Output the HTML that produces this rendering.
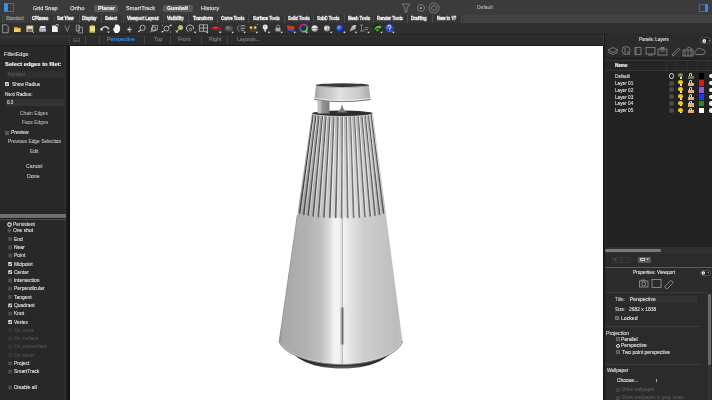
<!DOCTYPE html>
<html><head><meta charset="utf-8">
<style>
*{margin:0;padding:0;box-sizing:border-box}
html,body{-webkit-font-smoothing:antialiased;width:712px;height:400px;overflow:hidden;background:#2a2a2a;font-family:"Liberation Sans",sans-serif;color:#ddd}
.a{position:absolute;white-space:nowrap}
.tx{will-change:transform;-webkit-text-stroke:0.08px currentColor}
.txb{-webkit-text-stroke:0.18px currentColor}
</style></head><body>
<div class="a" style="left:0px;top:0px;width:712px;height:15px;background:#3b3b3b;"></div>
<div class="a" style="left:0px;top:15px;width:712px;height:8px;background:#353535;"></div>
<div class="a" style="left:463px;top:15px;width:249px;height:8px;background:#434343;"></div>
<div class="a" style="left:0px;top:23px;width:712px;height:10px;background:#303030;"></div>
<div class="a" style="left:0px;top:33px;width:712px;height:2px;background:#2a2a2a;"></div>
<div class="a" style="left:0px;top:35px;width:712px;height:3px;background:#353535;"></div>
<div class="a" style="left:0px;top:38px;width:712px;height:3px;background:#2f2f2f;"></div>
<div class="a" style="left:0px;top:41px;width:712px;height:4px;background:#2c2c2c;"></div>
<div class="a" style="left:0px;top:45px;width:712px;height:1px;background:#1c1c1c;"></div>
<div class="a" style="left:0px;top:46px;width:712px;height:354px;background:#282828;"></div>
<div class="a" style="left:64px;top:46px;width:2px;height:354px;background:#2f2f2f;"></div>
<div class="a" style="left:66px;top:45px;width:2px;height:355px;background:#1c1c1c;"></div>
<div class="a" style="left:68px;top:45px;width:2px;height:355px;background:#141414;"></div>
<div class="a" style="left:69px;top:34px;width:1px;height:12px;background:#3a3a3a;"></div>
<div class="a" style="left:70px;top:45.5px;width:533px;height:354.5px;background:#ffffff;"></div>
<div class="a" style="left:603px;top:34px;width:2px;height:366px;background:#1a1a1a;"></div>
<div class="a" style="left:4px;top:3.2px;width:3.6px;height:8.8px;background:#3a8ee6;border-radius:0.8px"></div>
<div class="a" style="left:7.2px;top:3.2px;width:6.4px;height:8.8px;background:transparent;border:0.9px solid #3a6db0;border-left:none;border-radius:0 0.8px 0.8px 0"></div>
<div class="a tx" style="left:32.73px;top:5.08px;font-size:5.434px;line-height:6.24px;color:#d4d4d4;font-weight:normal;-webkit-text-stroke:0.25px #d4d4d4">Grid Snap</div>
<div class="a tx" style="left:70.27px;top:4.74px;font-size:5.815px;line-height:6.68px;color:#d4d4d4;font-weight:normal;-webkit-text-stroke:0.25px #d4d4d4">Ortho</div>
<div class="a" style="left:93.5px;top:5px;width:24px;height:7px;background:#5a5a5a;border-radius:2px"></div>
<div class="a tx txb" style="left:97.57px;top:4.97px;font-size:5.556px;line-height:6.38px;color:#f0f0f0;font-weight:bold;">Planar</div>
<div class="a tx" style="left:125.77px;top:4.85px;font-size:5.686px;line-height:6.53px;color:#d4d4d4;font-weight:normal;-webkit-text-stroke:0.25px #d4d4d4">SmartTrack</div>
<div class="a" style="left:162.7px;top:5px;width:30.3px;height:7px;background:#5a5a5a;border-radius:2px"></div>
<div class="a tx txb" style="left:167.39px;top:5.26px;font-size:5.241px;line-height:6.02px;color:#f0f0f0;font-weight:bold;">Gumball</div>
<div class="a tx" style="left:200.53px;top:4.72px;font-size:5.839px;line-height:6.71px;color:#d4d4d4;font-weight:normal;-webkit-text-stroke:0.25px #d4d4d4">History</div>
<svg class="a" style="left:400px;top:2px;" width="40" height="12" viewBox="0 0 40 12"><path d="M2 2 L10 2 L7 6 L7 10 L5 10 L5 6 Z" fill="none" stroke="#8a8a8a" stroke-width="0.8"/><circle cx="21" cy="6" r="3.5" fill="none" stroke="#8a8a8a" stroke-width="0.8"/><circle cx="21" cy="6" r="1" fill="#aaa"/><circle cx="34" cy="6" r="5" fill="none" stroke="#8a8a8a" stroke-width="0.8"/><circle cx="34" cy="6" r="2.5" fill="none" stroke="#8a8a8a" stroke-width="0.8"/></svg>
<div class="a tx" style="left:477.3px;top:5.46px;font-size:5.015px;line-height:5.76px;color:#b8b8b8;font-weight:normal;">Default</div>
<div class="a" style="left:698.8px;top:3.5px;width:6.2px;height:8.5px;background:transparent;border:0.9px solid #3a6db0;border-right:none;border-radius:0.8px 0 0 0.8px"></div>
<div class="a" style="left:704.8px;top:3.5px;width:3.6px;height:8.5px;background:#2a8af0;border-radius:0.8px"></div>
<div class="a" style="left:2px;top:15px;width:27px;height:8px;background:#3a3a3a;"></div>
<div class="a" style="left:2px;top:15px;width:1px;height:8px;background:#4a4a4a;"></div>
<div class="a" style="left:29.5px;top:15px;width:1px;height:8px;background:#4a4a4a;"></div>
<div class="a" style="left:53.7px;top:15px;width:1px;height:8px;background:#4a4a4a;"></div>
<div class="a" style="left:79px;top:15px;width:1px;height:8px;background:#4a4a4a;"></div>
<div class="a" style="left:101px;top:15px;width:1px;height:8px;background:#4a4a4a;"></div>
<div class="a" style="left:123px;top:15px;width:1px;height:8px;background:#4a4a4a;"></div>
<div class="a" style="left:163px;top:15px;width:1px;height:8px;background:#4a4a4a;"></div>
<div class="a" style="left:188.4px;top:15px;width:1px;height:8px;background:#4a4a4a;"></div>
<div class="a" style="left:216.8px;top:15px;width:1px;height:8px;background:#4a4a4a;"></div>
<div class="a" style="left:248px;top:15px;width:1px;height:8px;background:#4a4a4a;"></div>
<div class="a" style="left:283.7px;top:15px;width:1px;height:8px;background:#4a4a4a;"></div>
<div class="a" style="left:313px;top:15px;width:1px;height:8px;background:#4a4a4a;"></div>
<div class="a" style="left:343.7px;top:15px;width:1px;height:8px;background:#4a4a4a;"></div>
<div class="a" style="left:373px;top:15px;width:1px;height:8px;background:#4a4a4a;"></div>
<div class="a" style="left:406.8px;top:15px;width:1px;height:8px;background:#4a4a4a;"></div>
<div class="a" style="left:431.6px;top:15px;width:1px;height:8px;background:#4a4a4a;"></div>
<div class="a" style="left:461px;top:15px;width:1px;height:8px;background:#4a4a4a;"></div>
<div class="a tx txb" style="left:6.21px;top:16.35px;font-size:4.7px;line-height:5.40px;color:#8a8a8a;font-weight:bold;transform:scaleX(0.873);transform-origin:0 0;-webkit-text-stroke:0.3px #8a8a8a">Standard</div>
<div class="a tx txb" style="left:32.41px;top:16.35px;font-size:4.7px;line-height:5.40px;color:#f4f4f4;font-weight:bold;transform:scaleX(0.873);transform-origin:0 0;-webkit-text-stroke:0.3px #f4f4f4">CPlanes</div>
<div class="a tx txb" style="left:56.71px;top:16.35px;font-size:4.7px;line-height:5.40px;color:#f4f4f4;font-weight:bold;transform:scaleX(0.873);transform-origin:0 0;-webkit-text-stroke:0.3px #f4f4f4">Set View</div>
<div class="a tx txb" style="left:81.72px;top:16.35px;font-size:4.7px;line-height:5.40px;color:#f4f4f4;font-weight:bold;transform:scaleX(0.873);transform-origin:0 0;-webkit-text-stroke:0.3px #f4f4f4">Display</div>
<div class="a tx txb" style="left:104.91px;top:16.35px;font-size:4.7px;line-height:5.40px;color:#f4f4f4;font-weight:bold;transform:scaleX(0.873);transform-origin:0 0;-webkit-text-stroke:0.3px #f4f4f4">Select</div>
<div class="a tx txb" style="left:127.4px;top:16.35px;font-size:4.7px;line-height:5.40px;color:#f4f4f4;font-weight:bold;transform:scaleX(0.873);transform-origin:0 0;-webkit-text-stroke:0.3px #f4f4f4">Viewport Layout</div>
<div class="a tx txb" style="left:167.4px;top:16.35px;font-size:4.7px;line-height:5.40px;color:#f4f4f4;font-weight:bold;transform:scaleX(0.873);transform-origin:0 0;-webkit-text-stroke:0.3px #f4f4f4">Visibility</div>
<div class="a tx txb" style="left:192.55px;top:16.35px;font-size:4.7px;line-height:5.40px;color:#f4f4f4;font-weight:bold;transform:scaleX(0.873);transform-origin:0 0;-webkit-text-stroke:0.3px #f4f4f4">Transform</div>
<div class="a tx txb" style="left:220.81px;top:16.35px;font-size:4.7px;line-height:5.40px;color:#f4f4f4;font-weight:bold;transform:scaleX(0.873);transform-origin:0 0;-webkit-text-stroke:0.3px #f4f4f4">Curve Tools</div>
<div class="a tx txb" style="left:252.51px;top:16.35px;font-size:4.7px;line-height:5.40px;color:#f4f4f4;font-weight:bold;transform:scaleX(0.873);transform-origin:0 0;-webkit-text-stroke:0.3px #f4f4f4">Surface Tools</div>
<div class="a tx txb" style="left:287.91px;top:16.35px;font-size:4.7px;line-height:5.40px;color:#f4f4f4;font-weight:bold;transform:scaleX(0.873);transform-origin:0 0;-webkit-text-stroke:0.3px #f4f4f4">Solid Tools</div>
<div class="a tx txb" style="left:317.31px;top:16.35px;font-size:4.7px;line-height:5.40px;color:#f4f4f4;font-weight:bold;transform:scaleX(0.873);transform-origin:0 0;-webkit-text-stroke:0.3px #f4f4f4">SubD Tools</div>
<div class="a tx txb" style="left:347.72px;top:16.35px;font-size:4.7px;line-height:5.40px;color:#f4f4f4;font-weight:bold;transform:scaleX(0.873);transform-origin:0 0;-webkit-text-stroke:0.3px #f4f4f4">Mesh Tools</div>
<div class="a tx txb" style="left:377.12px;top:16.35px;font-size:4.7px;line-height:5.40px;color:#f4f4f4;font-weight:bold;transform:scaleX(0.873);transform-origin:0 0;-webkit-text-stroke:0.3px #f4f4f4">Render Tools</div>
<div class="a tx txb" style="left:411.32px;top:16.35px;font-size:4.7px;line-height:5.40px;color:#f4f4f4;font-weight:bold;transform:scaleX(0.873);transform-origin:0 0;-webkit-text-stroke:0.3px #f4f4f4">Drafting</div>
<div class="a tx txb" style="left:436.52px;top:16.35px;font-size:4.7px;line-height:5.40px;color:#f4f4f4;font-weight:bold;transform:scaleX(0.873);transform-origin:0 0;-webkit-text-stroke:0.3px #f4f4f4">New in V7</div>
<svg class="a" style="left:0px;top:0px;" width="400" height="36" viewBox="0 0 400 36"><defs><linearGradient id="cw" x1="0" y1="0" x2="1" y2="1"><stop offset="0" stop-color="#e02020"/><stop offset="0.3" stop-color="#c020c0"/><stop offset="0.5" stop-color="#2080e0"/><stop offset="0.75" stop-color="#20d060"/><stop offset="1" stop-color="#e0e020"/></linearGradient><radialGradient id="sph" cx="0.4" cy="0.35" r="0.7"><stop offset="0" stop-color="#ffffff"/><stop offset="0.6" stop-color="#c8c8c8"/><stop offset="1" stop-color="#777"/></radialGradient><radialGradient id="bsph" cx="0.35" cy="0.35" r="0.75"><stop offset="0" stop-color="#80a8ff"/><stop offset="0.45" stop-color="#2850d0"/><stop offset="1" stop-color="#0a1a60"/></radialGradient></defs><path d="M2.6 24.8 H6.5 L8.2 26.5 V32.8 H2.6 Z" fill="none" stroke="#b0b0b0" stroke-width="0.8"/><path d="M14 27 H17 L17.8 27.8 H20.6 V32 H14 Z" fill="#d4a828"/><path d="M14.2 28.8 H20.6 L20 32 H14 Z" fill="#f0d060"/><rect x="26.3" y="25.5" width="7" height="6.5" fill="#bdb596"/><rect x="27.3" y="26.3" width="5" height="2.2" fill="#eae4c8"/><rect x="27.8" y="29.2" width="4" height="2.4" fill="#6a6650"/><path d="M32.8 31.5 L34.2 33 L33 33.3 Z" fill="#ddd"/><path d="M40.5 26 H45.5 L45.5 28.5 H39.3 Z" fill="#e8e8e8"/><rect x="39.2" y="28.5" width="6.8" height="3.2" rx="0.8" fill="#b8b8b8"/><path d="M52 25.5 H55.6 L57.8 27.5 V32 H52 Z" fill="#f0f0f0"/><path d="M55.8 24.5 L58.2 24.5 L58.2 26.5" fill="none" stroke="#ddd" stroke-width="0.7"/><path d="M64.8 25.4 L67.2 31.3 M69.6 25.4 L67.2 31.3" stroke="#9a9a9a" stroke-width="0.8" fill="none"/><path d="M76.2 25.2 H79.5 V31 H76.2 Z M78.2 27.2 H82.5 V33 H78.2 Z" fill="none" stroke="#a8a8a8" stroke-width="0.75"/><rect x="89.6" y="25.8" width="5.4" height="6.6" fill="#eedc78"/><rect x="90.8" y="25.2" width="3" height="1.2" fill="#c8b050"/><rect x="89.6" y="31" width="5.4" height="1.4" fill="#c8b450"/><path d="M101 30 Q102.5 26.3 106 26.8 Q108.3 27.3 108.8 29.3" fill="none" stroke="#e8e8e8" stroke-width="1.2"/><path d="M100.2 28.2 L101 31 L103.2 29.5 Z" fill="#e8e8e8"/><path d="M107.3 31.6 L109.7 31.6 L108.5 33.2 Z" fill="#e8e8e8"/><path d="M113.3 28.5 L114.5 27.5 L115 25 L116.2 24.3 L117.2 24.8 L118.6 24.6 L119.4 26 L120.2 27 L119.8 31 L118 33 L115 33 L113.3 30 Z" fill="#f4f4f4"/><path d="M129.8 26.6 V32.5 M127.6 29.5 H131.8" stroke="#d8d8d8" stroke-width="0.8"/><circle cx="128.4" cy="29.4" r="0.9" fill="#fff"/><circle cx="142.6" cy="27.8" r="2.6" fill="none" stroke="#d0d0d0" stroke-width="0.8"/><path d="M140.7 29.8 L138.3 32" stroke="#d0d0d0" stroke-width="1.1"/><rect x="152.5" y="25.3" width="5" height="4.8" fill="none" stroke="#b8b8b8" stroke-width="0.7"/><circle cx="153.6" cy="29" r="2.2" fill="none" stroke="#d0d0d0" stroke-width="0.8"/><path d="M152 30.7 L150.4 32.2" stroke="#d0d0d0" stroke-width="1"/><circle cx="166.5" cy="28.6" r="2.4" fill="none" stroke="#d0d0d0" stroke-width="0.8"/><path d="M162 32 L164.5 30.5 M168.5 26.6 L171.2 25" stroke="#d0d0d0" stroke-width="0.9"/><circle cx="162.3" cy="31.8" r="0.7" fill="#eee"/><circle cx="171" cy="25.2" r="0.7" fill="#eee"/><circle cx="162.5" cy="25.5" r="0.6" fill="#bbb"/><circle cx="170.6" cy="32" r="0.6" fill="#bbb"/><circle cx="180.5" cy="27.4" r="2.5" fill="#b8c868"/><path d="M178.5 29.6 L176 32.3" stroke="#c8d070" stroke-width="1.2"/><path d="M175.5 30.5 L177.8 32.5" stroke="#ddd" stroke-width="0.6"/><path d="M188 31.5 A3.6 3.6 0 1 1 193.6 29" fill="none" stroke="#d0d0d0" stroke-width="0.9"/><circle cx="190.6" cy="29.5" r="1.2" fill="none" stroke="#ddd" stroke-width="0.6"/><path d="M194.0 31.8 L196.39999999999998 31.8 L195.2 33.4 Z" fill="#e8e8e8"/><path d="M199.4 24.8 H207.5 V31.3 H199.4 Z M203.45 24.8 V31.3 M199.4 28 H207.5" fill="none" stroke="#c8c8c8" stroke-width="0.75"/><path d="M206.0 31.8 L208.39999999999998 31.8 L207.2 33.4 Z" fill="#e8e8e8"/><ellipse cx="216.2" cy="28.3" rx="5.3" ry="1.9" fill="#b01515"/><ellipse cx="215.5" cy="27.6" rx="2.5" ry="0.7" fill="#e06060"/><rect x="219.5" y="31.5" width="1.6" height="1.6" fill="#ddd"/><ellipse cx="228.8" cy="28.5" rx="4" ry="2.8" fill="#555"/><ellipse cx="228" cy="27.8" rx="2" ry="1.3" fill="#777"/><path d="M231.5 31.8 L233.89999999999998 31.8 L232.7 33.4 Z" fill="#e8e8e8"/><path d="M239.6 25.5 A3 3 0 0 0 239.6 31.3" fill="none" stroke="#999" stroke-width="0.7"/><path d="M240.5 25.8 H245.5 M240.5 28.3 H245 M241 30.3 H244" stroke="#d8d8d8" stroke-width="0.7"/><path d="M243.4 31.8 L245.79999999999998 31.8 L244.6 33.4 Z" fill="#e8e8e8"/><ellipse cx="253" cy="29.8" rx="3.5" ry="2.2" fill="#4a4030"/><circle cx="251" cy="27.5" r="1.3" fill="#f0e030"/><circle cx="255.2" cy="27.5" r="1.3" fill="#f0e030"/><circle cx="257.5" cy="24.2" r="0.5" fill="#ccc"/><path d="M255.60000000000002 31.8 L258.0 31.8 L256.8 33.4 Z" fill="#e8e8e8"/><circle cx="265.2" cy="26.9" r="2.5" fill="#eeeeee"/><rect x="264.3" y="28.8" width="1.8" height="2.7" fill="#dddddd"/><circle cx="264.8" cy="26.6" r="1" fill="#bbb"/><path d="M267.8 31.8 L270.2 31.8 L269 33.4 Z" fill="#e8e8e8"/><rect x="275.5" y="27.8" width="5" height="3.6" fill="#aaaaaa"/><path d="M276.5 27.8 V26.5 A1.5 1.5 0 0 1 279.5 26.5 V27.8" fill="none" stroke="#9a9a9a" stroke-width="0.8"/><path d="M280.5 31.8 L282.9 31.8 L281.7 33.4 Z" fill="#e8e8e8"/><path d="M287 25.2 L294.8 26.5 L294 30 L287.5 29 Z" fill="#d03a28"/><path d="M287.5 29 L294 30 L293.2 31.4 L288 30.8 Z" fill="#3a5ac8"/><path d="M293.6 31.8 L296.0 31.8 L294.8 33.4 Z" fill="#e8e8e8"/><circle cx="303.6" cy="28.1" r="3.6" fill="none" stroke="url(#cw)" stroke-width="1.7"/><path d="M305.5 31.8 L307.9 31.8 L306.7 33.4 Z" fill="#e8e8e8"/><circle cx="314.8" cy="28.5" r="3.3" fill="url(#sph)"/><rect x="311.5" y="28.2" width="6.6" height="0.6" fill="#666"/><circle cx="327" cy="28.5" r="3" fill="url(#sph)"/><rect x="326.8" y="25.3" width="0.6" height="6.4" fill="#555"/><path d="M330.0 31.8 L332.4 31.8 L331.2 33.4 Z" fill="#e8e8e8"/><circle cx="340" cy="28.5" r="3.7" fill="url(#bsph)"/><rect x="343.6" y="31.5" width="1.6" height="1.6" fill="#ddd"/><path d="M349.5 31.5 L352 26 L356 25 L355.5 29 Z" fill="#b8b0a0"/><path d="M352 26 L356 25 L354.5 27.5 Z" fill="#e0d8c0"/><path d="M354.8 31.8 L357.2 31.8 L356 33.4 Z" fill="#e8e8e8"/><path d="M360 25 H363 M361.5 25 V31 M364.5 27.5 H368.5 M364.5 29.5 H368 M360 31 H365" stroke="#b0b0b0" stroke-width="0.6"/><path d="M367.3 31.8 L369.7 31.8 L368.5 33.4 Z" fill="#e8e8e8"/><circle cx="377.3" cy="28.3" r="4.2" fill="#1a2a10"/><path d="M374 30.5 Q375 25.5 379.5 26 L379 24.8 L381.5 27.2 L378.8 29.2 L379.2 27.6 Q376.3 27.3 374 30.5 Z" fill="#70d040"/><circle cx="377.5" cy="30" r="1.5" fill="#50a030"/><path d="M380.3 31.8 L382.7 31.8 L381.5 33.4 Z" fill="#e8e8e8"/><circle cx="389.5" cy="28.3" r="4.2" fill="#2848b8"/><circle cx="388.5" cy="27" r="2.5" fill="#6080e0" opacity="0.6"/><path d="M388 26.8 A1.5 1.5 0 1 1 389.8 28.2 V29.6" fill="none" stroke="#f0f0f0" stroke-width="0.9"/><circle cx="389.8" cy="31" r="0.5" fill="#fff"/><path d="M392.2 31.8 L394.59999999999997 31.8 L393.4 33.4 Z" fill="#e8e8e8"/></svg>
<div class="a" style="left:70px;top:35px;width:533px;height:10px;background:#2b2b2b;"></div>
<div class="a" style="left:70px;top:36px;width:533px;height:0.6px;background:#333;"></div>
<div class="a" style="left:72.5px;top:37.5px;width:7px;height:4.5px;background:transparent;border:0.6px solid #4e4e4e"></div>
<div class="a" style="left:72.5px;top:39.5px;width:7px;height:0.6px;background:#4e4e4e;"></div>
<div class="a" style="left:85px;top:36px;width:1px;height:8px;background:#444;"></div>
<div class="a" style="left:99px;top:36px;width:1px;height:8px;background:#444;"></div>
<div class="a tx" style="left:106.58px;top:36.20px;font-size:5.3px;line-height:6.09px;color:#3584e4;font-weight:normal;-webkit-text-stroke:0.2px #3584e4">Perspective</div>
<div class="a" style="left:144.3px;top:36px;width:1px;height:8px;background:#444;"></div>
<div class="a tx" style="left:154.29px;top:36.20px;font-size:5.3px;line-height:6.09px;color:#777;font-weight:normal;-webkit-text-stroke:0.2px #777">Top</div>
<div class="a" style="left:170px;top:36px;width:1px;height:8px;background:#444;"></div>
<div class="a tx" style="left:177.98px;top:36.20px;font-size:5.3px;line-height:6.09px;color:#777;font-weight:normal;-webkit-text-stroke:0.2px #777">Front</div>
<div class="a" style="left:201px;top:36px;width:1px;height:8px;background:#444;"></div>
<div class="a tx" style="left:209.18px;top:36.20px;font-size:5.3px;line-height:6.09px;color:#777;font-weight:normal;-webkit-text-stroke:0.2px #777">Right</div>
<div class="a" style="left:227px;top:36px;width:1px;height:8px;background:#444;"></div>
<div class="a tx" style="left:237.08px;top:36.20px;font-size:5.3px;line-height:6.09px;color:#777;font-weight:normal;-webkit-text-stroke:0.2px #777">Layouts...</div>
<div class="a tx" style="left:3.56px;top:50.98px;font-size:5.542px;line-height:6.37px;color:#e0e0e0;font-weight:normal;">FilletEdge</div>
<div class="a tx txb" style="left:4.88px;top:60.73px;font-size:5.826px;line-height:6.69px;color:#f0f0f0;font-weight:bold;">Select edges to filet:</div>
<div class="a" style="left:6px;top:71px;width:58px;height:7px;background:#2f2f2f;"></div>
<div class="a tx" style="left:7.61px;top:71.56px;font-size:4.908px;line-height:5.64px;color:#5a5a5a;font-weight:normal;">Number</div>
<div class="a" style="left:5px;top:82px;width:3.8px;height:3.8px;background:#d8d8d8;border-radius:0.5px"></div>
<svg class="a" style="left:5px;top:82px;" width="4" height="4" viewBox="0 0 4 4"><path d="M0.8 2 L1.7 3 L3.3 0.8" fill="none" stroke="#222" stroke-width="0.7"/></svg>
<div class="a tx" style="left:11.71px;top:81.66px;font-size:4.8px;line-height:5.52px;color:#e8e8e8;font-weight:normal;">Show Radius</div>
<div class="a tx" style="left:4.62px;top:91.66px;font-size:4.8px;line-height:5.52px;color:#e8e8e8;font-weight:normal;">Next Radius:</div>
<div class="a" style="left:5.6px;top:99px;width:58.8px;height:7px;background:#333333;"></div>
<div class="a tx" style="left:6.86px;top:100.40px;font-size:4.532px;line-height:5.21px;color:#e0e0e0;font-weight:normal;">0.3</div>
<div class="a tx" style="left:20.36px;top:110.57px;font-size:4.9px;line-height:5.63px;color:#b4b4b4;font-weight:normal;">Chain Edges</div>
<div class="a tx" style="left:21.51px;top:119.57px;font-size:4.9px;line-height:5.63px;color:#b4b4b4;font-weight:normal;">Face Edges</div>
<div class="a" style="left:5.2px;top:130.6px;width:4px;height:4px;background:#5a5a5a;border-radius:0.5px"></div>
<div class="a tx" style="left:10.8px;top:130.01px;font-size:4.965px;line-height:5.70px;color:#e8e8e8;font-weight:normal;">Preview</div>
<div class="a tx" style="left:7.81px;top:139.07px;font-size:4.9px;line-height:5.63px;color:#c4c4c4;font-weight:normal;">Previous Edge Selection</div>
<div class="a tx" style="left:29.61px;top:148.57px;font-size:4.9px;line-height:5.63px;color:#c4c4c4;font-weight:normal;">Edit</div>
<div class="a tx" style="left:25.94px;top:162.73px;font-size:5.266px;line-height:6.05px;color:#d0d0d0;font-weight:normal;">Cancel</div>
<div class="a tx" style="left:27.28px;top:173.23px;font-size:5.276px;line-height:6.06px;color:#d0d0d0;font-weight:normal;">Done</div>
<div class="a" style="left:0px;top:209px;width:66px;height:1px;background:#222;"></div>
<div class="a" style="left:0px;top:213.5px;width:66px;height:4px;background:#6e6e6e;"></div>
<div class="a" style="left:0px;top:218px;width:66px;height:1px;background:#1e1e1e;"></div>
<div class="a" style="left:0px;top:219px;width:66px;height:1px;background:#4a4a4a;"></div>
<div class="a tx" style="left:12.8px;top:222.02px;font-size:4.95px;line-height:5.69px;color:#e8e8e8;font-weight:normal;">Persistent</div>
<div class="a tx" style="left:13.0px;top:228.02px;font-size:4.95px;line-height:5.69px;color:#e8e8e8;font-weight:normal;">One shot</div>
<div class="a tx" style="left:13.6px;top:236.52px;font-size:4.95px;line-height:5.69px;color:#e8e8e8;font-weight:normal;">End</div>
<div class="a tx" style="left:13.6px;top:245.02px;font-size:4.95px;line-height:5.69px;color:#e8e8e8;font-weight:normal;">Near</div>
<div class="a tx" style="left:13.6px;top:253.22px;font-size:4.95px;line-height:5.69px;color:#e8e8e8;font-weight:normal;">Point</div>
<div class="a tx" style="left:13.6px;top:261.52px;font-size:4.95px;line-height:5.69px;color:#e8e8e8;font-weight:normal;">Midpoint</div>
<div class="a tx" style="left:13.75px;top:269.72px;font-size:4.95px;line-height:5.69px;color:#e8e8e8;font-weight:normal;">Center</div>
<div class="a tx" style="left:13.55px;top:278.02px;font-size:4.95px;line-height:5.69px;color:#e8e8e8;font-weight:normal;">Intersection</div>
<div class="a tx" style="left:13.6px;top:286.22px;font-size:4.95px;line-height:5.69px;color:#e8e8e8;font-weight:normal;">Perpendicular</div>
<div class="a tx" style="left:13.9px;top:294.52px;font-size:4.95px;line-height:5.69px;color:#e8e8e8;font-weight:normal;">Tangent</div>
<div class="a tx" style="left:13.8px;top:302.82px;font-size:4.95px;line-height:5.69px;color:#e8e8e8;font-weight:normal;">Quadrant</div>
<div class="a tx" style="left:13.6px;top:311.12px;font-size:4.95px;line-height:5.69px;color:#e8e8e8;font-weight:normal;">Knot</div>
<div class="a tx" style="left:14.0px;top:319.52px;font-size:4.95px;line-height:5.69px;color:#e8e8e8;font-weight:normal;">Vertex</div>
<div class="a tx" style="left:13.8px;top:327.82px;font-size:4.95px;line-height:5.69px;color:#555555;font-weight:normal;">On curve</div>
<div class="a tx" style="left:13.8px;top:336.02px;font-size:4.95px;line-height:5.69px;color:#555555;font-weight:normal;">On surface</div>
<div class="a tx" style="left:13.8px;top:344.32px;font-size:4.95px;line-height:5.69px;color:#555555;font-weight:normal;">On polysurface</div>
<div class="a tx" style="left:13.8px;top:352.52px;font-size:4.95px;line-height:5.69px;color:#555555;font-weight:normal;">On mesh</div>
<div class="a tx" style="left:13.6px;top:360.82px;font-size:4.95px;line-height:5.69px;color:#e8e8e8;font-weight:normal;">Project</div>
<div class="a tx" style="left:13.8px;top:369.02px;font-size:4.95px;line-height:5.69px;color:#e8e8e8;font-weight:normal;">SmartTrack</div>
<div class="a tx" style="left:13.6px;top:385.02px;font-size:4.95px;line-height:5.69px;color:#e8e8e8;font-weight:normal;">Disable all</div>
<svg class="a" style="left:0px;top:0px;" width="66" height="400" viewBox="0 0 66 400"><circle cx="9.5" cy="224.60" r="1.75" fill="#1e1e1e" stroke="#e8e8e8" stroke-width="1.1"/><circle cx="9.5" cy="230.60" r="2.1" fill="#505050"/><rect x="8.2" y="237.10" width="3.8" height="3.8" rx="0.4" fill="#4c4c4c"/><rect x="8.2" y="245.60" width="3.8" height="3.8" rx="0.4" fill="#4c4c4c"/><rect x="8.2" y="253.80" width="3.8" height="3.8" rx="0.4" fill="#4c4c4c"/><rect x="8.2" y="262.10" width="3.8" height="3.8" rx="0.5" fill="#d8d8d8"/><path d="M8.9 264.10 L9.8 265.10 L11.4 262.90" fill="none" stroke="#1e1e1e" stroke-width="0.75"/><rect x="8.2" y="270.30" width="3.8" height="3.8" rx="0.5" fill="#d8d8d8"/><path d="M8.9 272.30 L9.8 273.30 L11.4 271.10" fill="none" stroke="#1e1e1e" stroke-width="0.75"/><rect x="8.2" y="278.60" width="3.8" height="3.8" rx="0.4" fill="#4c4c4c"/><rect x="8.2" y="286.80" width="3.8" height="3.8" rx="0.4" fill="#4c4c4c"/><rect x="8.2" y="295.10" width="3.8" height="3.8" rx="0.4" fill="#4c4c4c"/><rect x="8.2" y="303.40" width="3.8" height="3.8" rx="0.5" fill="#d8d8d8"/><path d="M8.9 305.40 L9.8 306.40 L11.4 304.20" fill="none" stroke="#1e1e1e" stroke-width="0.75"/><rect x="8.2" y="311.70" width="3.8" height="3.8" rx="0.4" fill="#4c4c4c"/><rect x="8.2" y="320.10" width="3.8" height="3.8" rx="0.5" fill="#d8d8d8"/><path d="M8.9 322.10 L9.8 323.10 L11.4 320.90" fill="none" stroke="#1e1e1e" stroke-width="0.75"/><rect x="8.2" y="328.40" width="3.8" height="3.8" rx="0.4" fill="#353535"/><rect x="8.2" y="336.60" width="3.8" height="3.8" rx="0.4" fill="#353535"/><rect x="8.2" y="344.90" width="3.8" height="3.8" rx="0.4" fill="#353535"/><rect x="8.2" y="353.10" width="3.8" height="3.8" rx="0.4" fill="#353535"/><rect x="8.2" y="361.40" width="3.8" height="3.8" rx="0.4" fill="#4c4c4c"/><rect x="8.2" y="369.60" width="3.8" height="3.8" rx="0.4" fill="#4c4c4c"/><rect x="8.2" y="385.60" width="3.8" height="3.8" rx="0.4" fill="#4c4c4c"/></svg>
<div class="a" style="left:605px;top:34px;width:107px;height:366px;background:#2b2b2b;"></div>
<div class="a" style="left:603px;top:34px;width:1px;height:12px;background:#3c3c3c;"></div>
<div class="a tx" style="left:639.04px;top:37.31px;font-size:4.52px;line-height:5.19px;color:#e8e8e8;font-weight:normal;">Panels: Layers</div>
<div class="a" style="left:700.4px;top:37px;width:11px;height:7px;border-radius:3.5px;background:#1e1e1e;border:0.7px solid #505050"></div>
<svg class="a" style="left:701px;top:37.5px;" width="10" height="6" viewBox="0 0 10 6"><circle cx="3.3" cy="3" r="1.9" fill="#f0f0f0"/><circle cx="3.3" cy="3" r="0.6" fill="#333"/><path d="M7.2 2.4 L9.2 2.4 L8.2 3.6 Z" fill="#e0e0e0"/></svg>
<svg class="a" style="left:606px;top:45px;" width="100" height="12" viewBox="0 0 100 12"><g fill="none" stroke="#9a9a9a" stroke-width="0.7"><path d="M2 5 L7 2.5 L12 5 L7 7.5 Z"/><path d="M2 7 L7 9.5 L12 7"/><circle cx="20" cy="5.5" r="4"/><path d="M19 3 V8.5 M21 6 L24 10"/><path d="M29 2.5 H35 V9.5 H29 Z M30 2.5 V9.5"/><rect x="40" y="2.5" width="9" height="6.5"/><path d="M42 10 H47"/><rect x="52" y="4" width="9" height="6"/><rect x="55" y="2.5" width="3" height="1.5"/><path d="M54 6 H59"/><path d="M66 10 L72.5 3 L74 4.5 L67.5 11 Z"/><rect x="77" y="5" width="10" height="6"/><path d="M79 5 V11 M82 5 V11 M85 5 V11 M80 4 L83 2 L86 4"/><path d="M89.5 9.5 H97 A2.5 2.5 0 0 0 96 4.5 A3.5 3.5 0 0 0 90 6 A2 2 0 0 0 89.5 9.5 Z"/></g></svg>
<div class="a" style="left:605px;top:57px;width:107px;height:190px;background:#222222;"></div>
<div class="a" style="left:605px;top:57px;width:2px;height:190px;background:#2a2a2a;"></div>
<div class="a" style="left:605px;top:59.5px;width:107px;height:11px;background:#252525;"></div>
<div class="a" style="left:605px;top:59.5px;width:107px;height:0.7px;background:#363636;"></div>
<div class="a" style="left:605px;top:70.3px;width:107px;height:0.7px;background:#363636;"></div>
<div class="a tx txb" style="left:614.62px;top:62.64px;font-size:4.6px;line-height:5.29px;color:#f0f0f0;font-weight:bold;">Name</div>
<div class="a" style="left:665.5px;top:61px;width:0.6px;height:8.5px;background:#303030;"></div>
<div class="a" style="left:676px;top:61px;width:0.6px;height:8.5px;background:#303030;"></div>
<div class="a" style="left:686.5px;top:61px;width:0.6px;height:8.5px;background:#303030;"></div>
<div class="a" style="left:697px;top:61px;width:0.6px;height:8.5px;background:#303030;"></div>
<div class="a" style="left:707.5px;top:61px;width:0.6px;height:8.5px;background:#303030;"></div>
<div class="a tx" style="left:614.52px;top:73.85px;font-size:4.7px;line-height:5.40px;color:#e4e4e4;font-weight:normal;">Default</div>
<div class="a" style="left:668.8px;top:73.30px;width:5.6px;height:5.6px;border-radius:50%;border:1.3px solid #d8d8d8;background:#222"></div>
<div class="a" style="left:678.2px;top:73.30px;width:5.2px;height:4px;border-radius:50% 50% 40% 40%;background:#8a7a50"></div>
<div class="a" style="left:679.8px;top:77.10px;width:2px;height:1.8px;background:#ddd"></div>
<div class="a" style="left:688px;top:75.80px;width:5.5px;height:3.2px;background:#77705a"></div>
<div class="a" style="left:689.3px;top:73.10px;width:3px;height:3.2px;border:0.8px solid #ddd;border-bottom:none;border-radius:1.5px 1.5px 0 0"></div>
<div class="a" style="left:698.5px;top:73.3px;width:5.7px;height:5.6px;background:#000000;"></div>
<div class="a" style="left:708.6px;top:73.80px;width:6px;height:4.6px;border-radius:2.3px;background:#f0f0f0"></div>
<div class="a tx" style="left:614.52px;top:80.75px;font-size:4.7px;line-height:5.40px;color:#e4e4e4;font-weight:normal;">Layer 01</div>
<div class="a" style="left:669px;top:80.50px;width:5px;height:5px;border-radius:50%;background:#4a4a4a"></div>
<div class="a" style="left:678.2px;top:80.20px;width:5.2px;height:4px;border-radius:50% 50% 40% 40%;background:#f2c81a"></div>
<div class="a" style="left:679.8px;top:84.00px;width:2px;height:1.8px;background:#ddd"></div>
<div class="a" style="left:688px;top:82.70px;width:5.5px;height:3.2px;background:#e0b070"></div>
<div class="a" style="left:689.3px;top:80.00px;width:3px;height:3.2px;border:0.8px solid #ddd;border-bottom:none;border-radius:1.5px 1.5px 0 0"></div>
<div class="a" style="left:698.5px;top:80.2px;width:5.7px;height:5.6px;background:#e01818;"></div>
<div class="a" style="left:708.6px;top:80.70px;width:6px;height:4.6px;border-radius:2.3px;background:#f0f0f0"></div>
<div class="a tx" style="left:614.52px;top:87.65px;font-size:4.7px;line-height:5.40px;color:#e4e4e4;font-weight:normal;">Layer 02</div>
<div class="a" style="left:669px;top:87.40px;width:5px;height:5px;border-radius:50%;background:#4a4a4a"></div>
<div class="a" style="left:678.2px;top:87.10px;width:5.2px;height:4px;border-radius:50% 50% 40% 40%;background:#f2c81a"></div>
<div class="a" style="left:679.8px;top:90.90px;width:2px;height:1.8px;background:#ddd"></div>
<div class="a" style="left:688px;top:89.60px;width:5.5px;height:3.2px;background:#e0b070"></div>
<div class="a" style="left:689.3px;top:86.90px;width:3px;height:3.2px;border:0.8px solid #ddd;border-bottom:none;border-radius:1.5px 1.5px 0 0"></div>
<div class="a" style="left:698.5px;top:87.1px;width:5.7px;height:5.6px;background:#9b55e0;"></div>
<div class="a" style="left:708.6px;top:87.60px;width:6px;height:4.6px;border-radius:2.3px;background:#f0f0f0"></div>
<div class="a tx" style="left:614.52px;top:94.55px;font-size:4.7px;line-height:5.40px;color:#e4e4e4;font-weight:normal;">Layer 03</div>
<div class="a" style="left:669px;top:94.30px;width:5px;height:5px;border-radius:50%;background:#4a4a4a"></div>
<div class="a" style="left:678.2px;top:94.00px;width:5.2px;height:4px;border-radius:50% 50% 40% 40%;background:#f2c81a"></div>
<div class="a" style="left:679.8px;top:97.80px;width:2px;height:1.8px;background:#ddd"></div>
<div class="a" style="left:688px;top:96.50px;width:5.5px;height:3.2px;background:#e0b070"></div>
<div class="a" style="left:689.3px;top:93.80px;width:3px;height:3.2px;border:0.8px solid #ddd;border-bottom:none;border-radius:1.5px 1.5px 0 0"></div>
<div class="a" style="left:698.5px;top:94.0px;width:5.7px;height:5.6px;background:#1a3cf0;"></div>
<div class="a" style="left:708.6px;top:94.50px;width:6px;height:4.6px;border-radius:2.3px;background:#f0f0f0"></div>
<div class="a tx" style="left:614.52px;top:101.45px;font-size:4.7px;line-height:5.40px;color:#e4e4e4;font-weight:normal;">Layer 04</div>
<div class="a" style="left:669px;top:101.20px;width:5px;height:5px;border-radius:50%;background:#4a4a4a"></div>
<div class="a" style="left:678.2px;top:100.90px;width:5.2px;height:4px;border-radius:50% 50% 40% 40%;background:#f2c81a"></div>
<div class="a" style="left:679.8px;top:104.70px;width:2px;height:1.8px;background:#ddd"></div>
<div class="a" style="left:688px;top:103.40px;width:5.5px;height:3.2px;background:#e0b070"></div>
<div class="a" style="left:689.3px;top:100.70px;width:3px;height:3.2px;border:0.8px solid #ddd;border-bottom:none;border-radius:1.5px 1.5px 0 0"></div>
<div class="a" style="left:698.5px;top:100.89999999999999px;width:5.7px;height:5.6px;background:#159a15;"></div>
<div class="a" style="left:708.6px;top:101.40px;width:6px;height:4.6px;border-radius:2.3px;background:#f0f0f0"></div>
<div class="a tx" style="left:614.52px;top:108.35px;font-size:4.7px;line-height:5.40px;color:#e4e4e4;font-weight:normal;">Layer 05</div>
<div class="a" style="left:669px;top:108.10px;width:5px;height:5px;border-radius:50%;background:#4a4a4a"></div>
<div class="a" style="left:678.2px;top:107.80px;width:5.2px;height:4px;border-radius:50% 50% 40% 40%;background:#f2c81a"></div>
<div class="a" style="left:679.8px;top:111.60px;width:2px;height:1.8px;background:#ddd"></div>
<div class="a" style="left:688px;top:110.30px;width:5.5px;height:3.2px;background:#e0b070"></div>
<div class="a" style="left:689.3px;top:107.60px;width:3px;height:3.2px;border:0.8px solid #ddd;border-bottom:none;border-radius:1.5px 1.5px 0 0"></div>
<div class="a" style="left:698.5px;top:107.8px;width:5.7px;height:5.6px;background:#ffffff;"></div>
<div class="a" style="left:708.6px;top:108.30px;width:6px;height:4.6px;border-radius:2.3px;background:#f0f0f0"></div>
<div class="a" style="left:605px;top:247px;width:107px;height:7px;background:#303030;"></div>
<div class="a" style="left:604.7px;top:248.6px;width:56px;height:3.7px;background:#7a7a7a;border-radius:1.8px"></div>
<div class="a" style="left:605px;top:254px;width:107px;height:13px;background:#2b2b2b;"></div>
<div class="a" style="left:611.8px;top:256.5px;width:19px;height:6.3px;border-radius:1px;background:#2e2e2e;border:0.5px solid #3a3a3a"></div>
<div class="a tx" style="left:614.0px;top:257.28px;font-size:5px;line-height:5.75px;color:#666;font-weight:normal;">+</div>
<div class="a tx" style="left:621.0px;top:257.28px;font-size:5px;line-height:5.75px;color:#666;font-weight:normal;">-</div>
<div class="a" style="left:637.7px;top:256.5px;width:13.3px;height:6.3px;border-radius:1px;background:#5a5a5a"></div>
<div class="a" style="left:640px;top:257.8px;width:5px;height:3.6px;background:transparent;border:0.6px solid #ccc"></div>
<svg class="a" style="left:646px;top:258px;" width="4" height="3" viewBox="0 0 4 3"><path d="M0.3 0.5 L3 0.5 L1.65 2.2 Z" fill="#ddd"/></svg>
<div class="a" style="left:605px;top:267px;width:107px;height:0.8px;background:#5a5a5a;"></div>
<div class="a" style="left:605px;top:268px;width:107px;height:124px;background:#2b2b2b;"></div>
<div class="a tx" style="left:633.43px;top:270.36px;font-size:4.681px;line-height:5.38px;color:#e8e8e8;font-weight:normal;">Properties: Viewport</div>
<div class="a" style="left:699.8px;top:269.6px;width:11px;height:6.4px;border-radius:3.2px;background:#1e1e1e;border:0.7px solid #505050"></div>
<svg class="a" style="left:700.4px;top:269.8px;" width="10" height="6" viewBox="0 0 10 6"><circle cx="3.3" cy="3" r="1.8" fill="#f0f0f0"/><circle cx="3.3" cy="3" r="0.6" fill="#333"/><path d="M7.2 2.4 L9.2 2.4 L8.2 3.6 Z" fill="#e0e0e0"/></svg>
<svg class="a" style="left:636px;top:277px;" width="40" height="12" viewBox="0 0 40 12"><g fill="none" stroke="#aaa" stroke-width="0.7"><rect x="3.5" y="4" width="8.5" height="6"/><circle cx="7.75" cy="7" r="2"/><path d="M5.5 4 V3 H9 V4"/><rect x="16" y="2.5" width="9" height="8"/><path d="M28.5 10 L34 4 A1.8 1.8 0 0 1 36.5 6.5 L31 12 Z"/></g></svg>
<div class="a" style="left:606px;top:291.5px;width:101px;height:0.6px;background:#3a3a3a;"></div>
<div class="a tx" style="left:614.91px;top:297.29px;font-size:4.649px;line-height:5.34px;color:#d8d8d8;font-weight:normal;">Title:</div>
<div class="a" style="left:628.3px;top:296px;width:69.2px;height:7px;background:#333333;"></div>
<div class="a tx" style="left:630.31px;top:297.05px;font-size:4.913px;line-height:5.65px;color:#e8e8e8;font-weight:normal;">Perspective</div>
<div class="a tx" style="left:614.81px;top:306.68px;font-size:4.773px;line-height:5.48px;color:#d8d8d8;font-weight:normal;">Size:</div>
<div class="a tx" style="left:628.75px;top:306.52px;font-size:4.946px;line-height:5.68px;color:#e8e8e8;font-weight:normal;">2682 x 1838</div>
<div class="a" style="left:615px;top:316.4px;width:4px;height:4px;background:#555;border-radius:0.6px;border:0.5px solid #777"></div>
<div class="a tx" style="left:620.79px;top:315.77px;font-size:5.116px;line-height:5.88px;color:#e8e8e8;font-weight:normal;">Locked</div>
<div class="a" style="left:605px;top:325.9px;width:95px;height:0.6px;background:#3c3c3c;"></div>
<div class="a tx" style="left:606.18px;top:330.50px;font-size:5.196px;line-height:5.97px;color:#e0e0e0;font-weight:normal;">Projection</div>
<div class="a" style="left:616px;top:337.4px;width:4px;height:4px;background:#4a4a4a;border-radius:0.6px;border:0.5px solid #6a6a6a"></div>
<div class="a tx" style="left:621.2px;top:336.69px;font-size:4.98px;line-height:5.72px;color:#e8e8e8;font-weight:normal;">Parallel</div>
<div class="a" style="left:615.8px;top:343.8px;width:4.4px;height:4.4px;border-radius:50%;border:1.1px solid #e8e8e8;background:#1e1e1e"></div>
<div class="a tx" style="left:621.2px;top:343.30px;font-size:4.972px;line-height:5.71px;color:#e8e8e8;font-weight:normal;">Perspective</div>
<div class="a" style="left:616px;top:350.2px;width:4px;height:4px;background:#4a4a4a;border-radius:0.6px;border:0.5px solid #6a6a6a"></div>
<div class="a tx" style="left:621.5px;top:349.50px;font-size:4.971px;line-height:5.71px;color:#e8e8e8;font-weight:normal;">Two point perspective</div>
<div class="a" style="left:605px;top:364.4px;width:95px;height:0.6px;background:#3c3c3c;"></div>
<div class="a tx" style="left:606.6px;top:368.25px;font-size:4.807px;line-height:5.52px;color:#e0e0e0;font-weight:normal;">Wallpaper</div>
<div class="a tx" style="left:616.65px;top:377.70px;font-size:4.973px;line-height:5.71px;color:#e8e8e8;font-weight:normal;">Choose...</div>
<div class="a" style="left:656px;top:378.5px;width:0.8px;height:3.5px;background:#aaa;"></div>
<div class="a" style="left:616px;top:387.8px;width:4px;height:4px;background:#383838;border-radius:0.6px;border:0.5px solid #444"></div>
<div class="a tx" style="left:621.41px;top:387.29px;font-size:4.767px;line-height:5.48px;color:#5a5a5a;font-weight:normal;">Show wallpaper</div>
<div class="a" style="left:616px;top:395.5px;width:4px;height:4px;background:#383838;border-radius:0.6px;border:0.5px solid #444"></div>
<div class="a tx" style="left:621.4px;top:394.89px;font-size:4.878px;line-height:5.60px;color:#5a5a5a;font-weight:normal;">Show wallpaper in gray scale</div>
<div class="a" style="left:707.7px;top:293.6px;width:3.3px;height:107px;background:#333333;"></div>
<div class="a" style="left:708.2px;top:294px;width:2.6px;height:71px;background:#6a6a6a;border-radius:1.3px"></div>
<svg class="a" style="left:0px;top:0px;pointer-events:none" width="712" height="400" viewBox="0 0 712 400"><defs><linearGradient id="foot" x1="0" y1="355" x2="0" y2="368.5" gradientUnits="userSpaceOnUse"><stop offset="0" stop-color="#1e1e1e"/><stop offset="0.75" stop-color="#333"/><stop offset="1" stop-color="#6a6a6a"/></linearGradient></defs><defs>
<linearGradient id="shell" x1="279" y1="0" x2="403" y2="0" gradientUnits="userSpaceOnUse">
<stop offset="0" stop-color="#8e8e8e"/>
<stop offset="0.03" stop-color="#a8a8a8"/>
<stop offset="0.2" stop-color="#b0b0b0"/>
<stop offset="0.33" stop-color="#bdbdbd"/>
<stop offset="0.40" stop-color="#d8d8d8"/>
<stop offset="0.45" stop-color="#f6f6f6"/>
<stop offset="0.49" stop-color="#f0f0f0"/>
<stop offset="0.505" stop-color="#d8d8d8"/>
<stop offset="0.52" stop-color="#f2f2f2"/>
<stop offset="0.58" stop-color="#e2e2e2"/>
<stop offset="0.68" stop-color="#cecece"/>
<stop offset="0.85" stop-color="#c4c4c4"/>
<stop offset="0.96" stop-color="#bcbcbc"/>
<stop offset="1" stop-color="#c4c4c4"/>
</linearGradient>
<linearGradient id="cap" x1="314" y1="0" x2="371" y2="0" gradientUnits="userSpaceOnUse">
<stop offset="0" stop-color="#a0a0a0"/>
<stop offset="0.12" stop-color="#bcbcbc"/>
<stop offset="0.3" stop-color="#cdcdcd"/>
<stop offset="0.45" stop-color="#e2e2e2"/>
<stop offset="0.58" stop-color="#d8d8d8"/>
<stop offset="0.8" stop-color="#cacaca"/>
<stop offset="1" stop-color="#a8a8a8"/>
</linearGradient>
<linearGradient id="post" x1="318" y1="0" x2="330" y2="0" gradientUnits="userSpaceOnUse">
<stop offset="0" stop-color="#c4c4c4"/>
<stop offset="0.3" stop-color="#b8b8b8"/>
<stop offset="0.45" stop-color="#909090"/>
<stop offset="1" stop-color="#7a7a7a"/>
</linearGradient>
<linearGradient id="grl" x1="298" y1="0" x2="386" y2="0" gradientUnits="userSpaceOnUse">
<stop offset="0" stop-color="#9a9a9a"/>
<stop offset="0.2" stop-color="#bababa"/>
<stop offset="0.42" stop-color="#d8d8d8"/>
<stop offset="0.55" stop-color="#dedede"/>
<stop offset="0.8" stop-color="#d0d0d0"/>
<stop offset="1" stop-color="#aaaaaa"/>
</linearGradient>
</defs><path d="M295.34 355.83 L296.95 357.02 L298.64 358.16 L300.39 359.25 L302.20 360.29 L304.08 361.26 L306.03 362.18 L308.03 363.03 L310.10 363.81 L312.23 364.53 L314.42 365.19 L316.66 365.78 L318.96 366.31 L321.32 366.78 L323.73 367.19 L326.19 367.54 L328.70 367.84 L331.27 368.07 L333.88 368.26 L336.54 368.39 L339.25 368.47 L342.00 368.50 L342.00 368.50 L344.75 368.47 L347.44 368.39 L350.08 368.26 L352.67 368.08 L355.20 367.84 L357.67 367.54 L360.09 367.19 L362.44 366.79 L364.74 366.32 L366.98 365.80 L369.16 365.22 L371.28 364.57 L373.33 363.87 L375.32 363.10 L377.25 362.27 L379.11 361.39 L380.91 360.45 L382.64 359.46 L384.31 358.41 L385.90 357.33 L387.43 356.19 L388.89 355.03 L388.89 351.67 L387.43 352.40 L385.90 353.12 L384.31 353.83 L382.64 354.51 L380.91 355.18 L379.11 355.82 L377.25 356.44 L375.32 357.03 L373.33 357.59 L371.28 358.12 L369.16 358.63 L366.98 359.09 L364.74 359.53 L362.44 359.92 L360.09 360.28 L357.67 360.59 L355.20 360.86 L352.67 361.08 L350.08 361.26 L347.44 361.39 L344.75 361.47 L342.00 361.50 L342.00 361.50 L339.25 361.47 L336.54 361.39 L333.88 361.26 L331.27 361.08 L328.70 360.86 L326.19 360.59 L323.73 360.28 L321.32 359.92 L318.96 359.53 L316.66 359.09 L314.42 358.63 L312.23 358.12 L310.10 357.59 L308.03 357.03 L306.03 356.44 L304.08 355.82 L302.20 355.18 L300.39 354.51 L298.64 353.83 L296.95 353.12 L295.34 352.40 Z" fill="url(#foot)"/><path d="M297.94 211 L279.28 341.0 C279.78 350.00 305.00 364.50 342 364.5 C379.00 364.50 401.93 350.00 402.43 341.0 L385.48 211 Z" fill="url(#shell)"/><path d="M279.28 341.0 C279.78 350.00 305.00 364.50 342 364.5 C379.00 364.50 401.93 350.00 402.43 341.0 " fill="none" stroke="#808080" stroke-width="1.0"/><path d="M280.58 342.0 C281.08 350.0 305 363.2 342 363.2 C379 363.2 400.63 350.0 401.13 342.0" fill="none" stroke="#f0f0f0" stroke-width="0.6" opacity="0.7"/><path d="M297.36 215 L279.28 341.0" stroke="#8a8a8a" stroke-width="0.8" fill="none"/><path d="M342.5 213 L342.5 364.5" stroke="#a0a0a0" stroke-width="0.6"/><rect x="340.6" y="306.7" width="3.5" height="38.5" rx="1.7" fill="#b0b0b0"/><rect x="341.7" y="307.8" width="1.3" height="36.3" rx="0.6" fill="#6e6e6e"/><path d="M312.05 113.5 L297.94 211.0 A43.77 6.5 0 0 0 385.48 211.0 L372.65 113.5 Z" fill="url(#grl)"/><defs><linearGradient id="hl" x1="0" y1="113" x2="0" y2="215" gradientUnits="userSpaceOnUse"><stop offset="0" stop-color="#f8f8f8" stop-opacity="1"/><stop offset="0.5" stop-color="#f4f4f4" stop-opacity="0.85"/><stop offset="1" stop-color="#f0f0f0" stop-opacity="0.5"/></linearGradient><linearGradient id="gdark" x1="0" y1="113" x2="0" y2="215" gradientUnits="userSpaceOnUse"><stop offset="0" stop-color="#000" stop-opacity="0.2"/><stop offset="0.45" stop-color="#000" stop-opacity="0.05"/><stop offset="1" stop-color="#000" stop-opacity="0"/></linearGradient></defs><path d="M312.05 113.5 L297.94 211.0 A43.77 6.5 0 0 0 385.48 211.0 L372.65 113.5 Z" fill="url(#gdark)"/><g><path d="M312.85 114.18 L313.84 114.51 L300.52 213.20 Q299.80 215.00 299.09 212.48 Z" fill="#444444"/><path d="M313.84 114.51 L314.38 114.65 L301.31 213.00 Q300.91 213.30 300.52 212.70 Z" fill="url(#hl)"/><path d="M315.62 114.91 L316.67 115.09 L304.62 214.45 Q303.85 216.25 303.09 214.06 Z" fill="#4b4b4b"/><path d="M316.67 115.09 L317.28 115.19 L305.49 214.15 Q305.06 214.45 304.62 213.95 Z" fill="url(#hl)"/><path d="M318.69 115.37 L319.80 115.50 L309.14 215.34 Q308.33 217.14 307.52 215.06 Z" fill="#525252"/><path d="M319.80 115.50 L320.47 115.58 L310.10 215.00 Q309.62 215.30 309.14 214.84 Z" fill="url(#hl)"/><path d="M322.04 115.73 L323.20 115.83 L314.05 216.04 Q313.21 217.84 312.37 215.82 Z" fill="#595959"/><path d="M323.20 115.83 L323.92 115.88 L315.08 215.66 Q314.57 215.96 314.05 215.54 Z" fill="url(#hl)"/><path d="M325.65 116.00 L326.85 116.08 L319.31 216.58 Q318.45 218.38 317.58 216.42 Z" fill="#5e5e5e"/><path d="M326.85 116.08 L327.61 116.12 L320.41 216.18 Q319.86 216.48 319.31 216.08 Z" fill="url(#hl)"/><path d="M329.47 116.22 L330.69 116.27 L324.87 217.00 Q323.98 218.80 323.10 216.88 Z" fill="#636363"/><path d="M330.69 116.27 L331.49 116.30 L326.01 216.57 Q325.44 216.87 324.87 216.50 Z" fill="url(#hl)"/><path d="M333.46 116.37 L334.70 116.40 L330.65 217.29 Q329.76 219.09 328.86 217.21 Z" fill="#666666"/><path d="M334.70 116.40 L335.51 116.42 L331.83 216.83 Q331.24 217.13 330.65 216.79 Z" fill="url(#hl)"/><path d="M337.56 116.46 L338.81 116.48 L336.59 217.46 Q335.69 219.26 334.79 217.42 Z" fill="#686868"/><path d="M338.81 116.48 L339.64 116.49 L337.80 216.97 Q337.19 217.27 336.59 216.96 Z" fill="url(#hl)"/><path d="M341.72 116.50 L342.98 116.50 L342.61 217.50 Q341.71 219.30 340.80 217.50 Z" fill="#787878"/><path d="M342.98 116.50 L343.81 116.50 L343.82 216.99 Q343.22 217.30 342.61 217.00 Z" fill="url(#hl)"/><path d="M345.89 116.48 L347.14 116.46 L348.63 217.42 Q347.72 219.26 346.82 217.46 Z" fill="#777777"/><path d="M347.14 116.46 L347.97 116.45 L349.82 216.89 Q349.22 217.22 348.63 216.92 Z" fill="url(#hl)"/><path d="M350.00 116.40 L351.24 116.37 L354.56 217.21 Q353.66 219.09 352.76 217.29 Z" fill="#757575"/><path d="M351.24 116.37 L352.05 116.34 L355.72 216.66 Q355.14 217.01 354.56 216.71 Z" fill="url(#hl)"/><path d="M354.01 116.27 L355.23 116.22 L360.32 216.88 Q359.43 218.80 358.55 217.00 Z" fill="#727272"/><path d="M355.23 116.22 L356.01 116.18 L361.44 216.30 Q360.88 216.68 360.32 216.38 Z" fill="url(#hl)"/><path d="M357.85 116.08 L359.05 116.00 L365.84 216.42 Q364.97 218.38 364.10 216.58 Z" fill="#6e6e6e"/><path d="M359.05 116.00 L359.79 115.95 L366.90 215.82 Q366.37 216.22 365.84 215.92 Z" fill="url(#hl)"/><path d="M361.50 115.83 L362.66 115.73 L371.05 215.82 Q370.21 217.84 369.37 216.04 Z" fill="#6a6a6a"/><path d="M362.66 115.73 L363.35 115.66 L372.04 215.19 Q371.54 215.62 371.05 215.32 Z" fill="url(#hl)"/><path d="M364.90 115.50 L366.01 115.37 L375.89 215.06 Q375.08 217.14 374.28 215.34 Z" fill="#646464"/><path d="M366.01 115.37 L366.65 115.29 L376.81 214.38 Q376.35 214.86 375.89 214.56 Z" fill="url(#hl)"/><path d="M368.03 115.09 L369.08 114.91 L380.33 214.06 Q379.56 216.25 378.80 214.45 Z" fill="#5e5e5e"/><path d="M369.08 114.91 L369.66 114.80 L381.16 213.32 Q380.74 213.86 380.33 213.56 Z" fill="url(#hl)"/><path d="M370.86 114.51 L371.85 114.18 L384.33 212.48 Q383.61 215.00 382.90 213.20 Z" fill="#585858"/><path d="M371.85 114.18 L372.36 113.91 L385.07 211.39 Q384.70 212.28 384.33 211.98 Z" fill="url(#hl)"/></g><ellipse cx="342.35" cy="113.5" rx="30.3" ry="3.0" fill="#2e2e2e"/><path d="M312.05 113.5 A30.3 3.0 0 0 0 372.65 113.5" fill="none" stroke="#e0e0e0" stroke-width="0.8"/><rect x="317.5" y="101" width="12" height="12.5" fill="url(#post)"/><rect x="321.6" y="101" width="0.7" height="12" fill="#7a7a7a"/><path d="M336.5 112.5 Q340.3 111 341.1 107 L342 104.2 L342.9 107 Q343.7 111 347.5 112.5 Z" fill="#7a7a7a"/><path d="M316 85 L314.3 99.8 Q342.5 104 370.6 99.8 L368.8 85 Z" fill="url(#cap)"/><path d="M314.3 99.6 Q342.5 103.8 370.6 99.6" fill="none" stroke="#707070" stroke-width="0.9"/><path d="M314.6 98.3 Q342.5 102.5 370.4 98.3" fill="none" stroke="#f0f0f0" stroke-width="0.8"/><ellipse cx="342.4" cy="85.2" rx="26.4" ry="1.9" fill="#3a3a3a"/><path d="M316 85.2 A26.4 1.9 0 0 0 368.8 85.2" fill="none" stroke="#2a2a2a" stroke-width="0.9"/><path d="M316.6 86.2 Q342.4 89.2 368.2 86.2" fill="none" stroke="#e8e8e8" stroke-width="0.6"/></svg>
</body></html>
